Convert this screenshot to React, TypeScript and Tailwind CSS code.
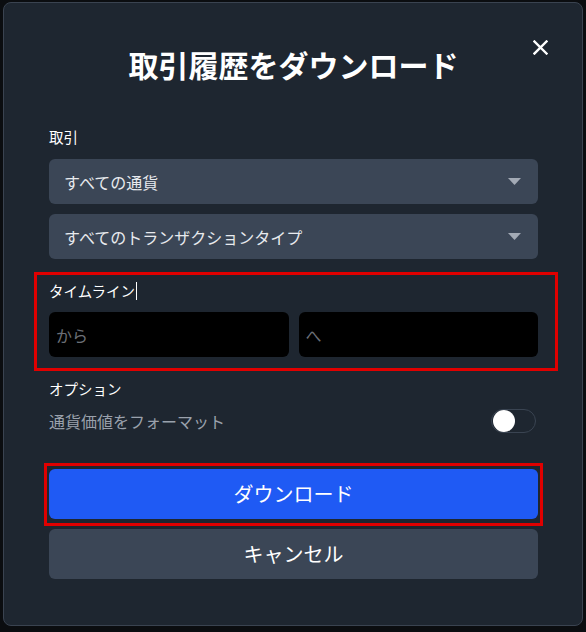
import React, { useState } from 'react';

const font = { fontFamily: '"Noto Sans CJK JP", "Noto Sans", sans-serif' };

const Caret = () => (
  <svg width="13" height="7" viewBox="0 0 13 7">
    <path d="M0 0 H13 L6.5 7 Z" fill="#a3aab5" />
  </svg>
);

const Select = ({ label }: { label: string }) => (
  <button className="flex h-[45px] w-full items-center justify-between rounded-md bg-[#3b4656] pl-[15px] pr-[17px] text-left text-[16px] text-[#e8eaee]">
    <span>{label}</span>
    <Caret />
  </button>
);

const App = () => {
  const [format, setFormat] = useState(false);

  return (
    <div className="h-[632px] w-[586px] bg-[#0b0d10] pl-[3px] pt-[2px]" style={font}>
      <div className="relative h-[624px] w-[580px] rounded-lg border border-[#3a4350] bg-[#1e2630] pl-[45px] pr-[44px]">
        {/* Close */}
        <button className="absolute right-[32px] top-[34px] flex h-5 w-5 items-center justify-center">
          <svg width="15" height="15" viewBox="0 0 15 15">
            <path d="M1.5 1.5 L13.5 13.5 M13.5 1.5 L1.5 13.5" stroke="#fff" strokeWidth="2.4" strokeLinecap="square" />
          </svg>
        </button>

        <h1 className="mt-[43px] text-center text-[30px] font-bold leading-[36px] text-white">
          取引履歴をダウンロード
        </h1>

        {/* Transactions */}
        <div className="mt-[45px] text-[14.5px] leading-5 text-white">取引</div>
        <div className="mt-3">
          <Select label="すべての通貨" />
        </div>
        <div className="mt-[10px]">
          <Select label="すべてのトランザクションタイプ" />
        </div>

        {/* Timeline */}
        <div className="-ml-[15px] -mr-[20px] mt-[13px] border-[3px] border-[#e00000] pb-[11px] pl-[12px] pr-[17px] pt-[6px]">
          <div className="flex items-center text-[14.5px] leading-5 text-white">
            タイムライン
            <span className="ml-px h-[18px] w-px bg-white" />
          </div>
          <div className="mt-[11px] grid grid-cols-2 gap-[10px]">
            <input
              placeholder="から"
              className="h-[45px] rounded-md bg-black px-[7px] text-[16px] text-white outline-none placeholder:text-[#6b6f76]"
            />
            <input
              placeholder="へ"
              className="h-[45px] rounded-md bg-black px-[7px] text-[16px] text-white outline-none placeholder:text-[#6b6f76]"
            />
          </div>
        </div>

        {/* Options */}
        <div className="mt-2 text-[14.5px] leading-5 text-white">オプション</div>
        <div className="mt-[10px] flex h-6 items-center justify-between">
          <span className="text-[16px] text-[#9aa1ac]">通貨価値をフォーマット</span>
          <button
            onClick={() => setFormat(!format)}
            className="mr-[2px] flex h-6 w-[45px] items-center rounded-full border border-[#3a4452] bg-[#1e2630] px-px"
          >
            <span className={`h-[22px] w-[22px] rounded-full bg-white ${format ? 'ml-auto' : ''}`} />
          </button>
        </div>

        {/* Actions */}
        <div className="-ml-[5px] -mr-[5px] mt-[30px] border-[3px] border-[#e00000] pb-[4px] pl-[2px] pr-[2px] pt-[3px]">
          <button className="flex h-[50px] w-full items-center justify-center rounded-md bg-[#1f5af4] text-[20px] text-white">
            ダウンロード
          </button>
        </div>
        <button className="mt-[3px] flex h-[50px] w-full items-center justify-center rounded-md bg-[#3b4656] text-[20px] text-white">
          キャンセル
        </button>
      </div>
    </div>
  );
};

export default App;
